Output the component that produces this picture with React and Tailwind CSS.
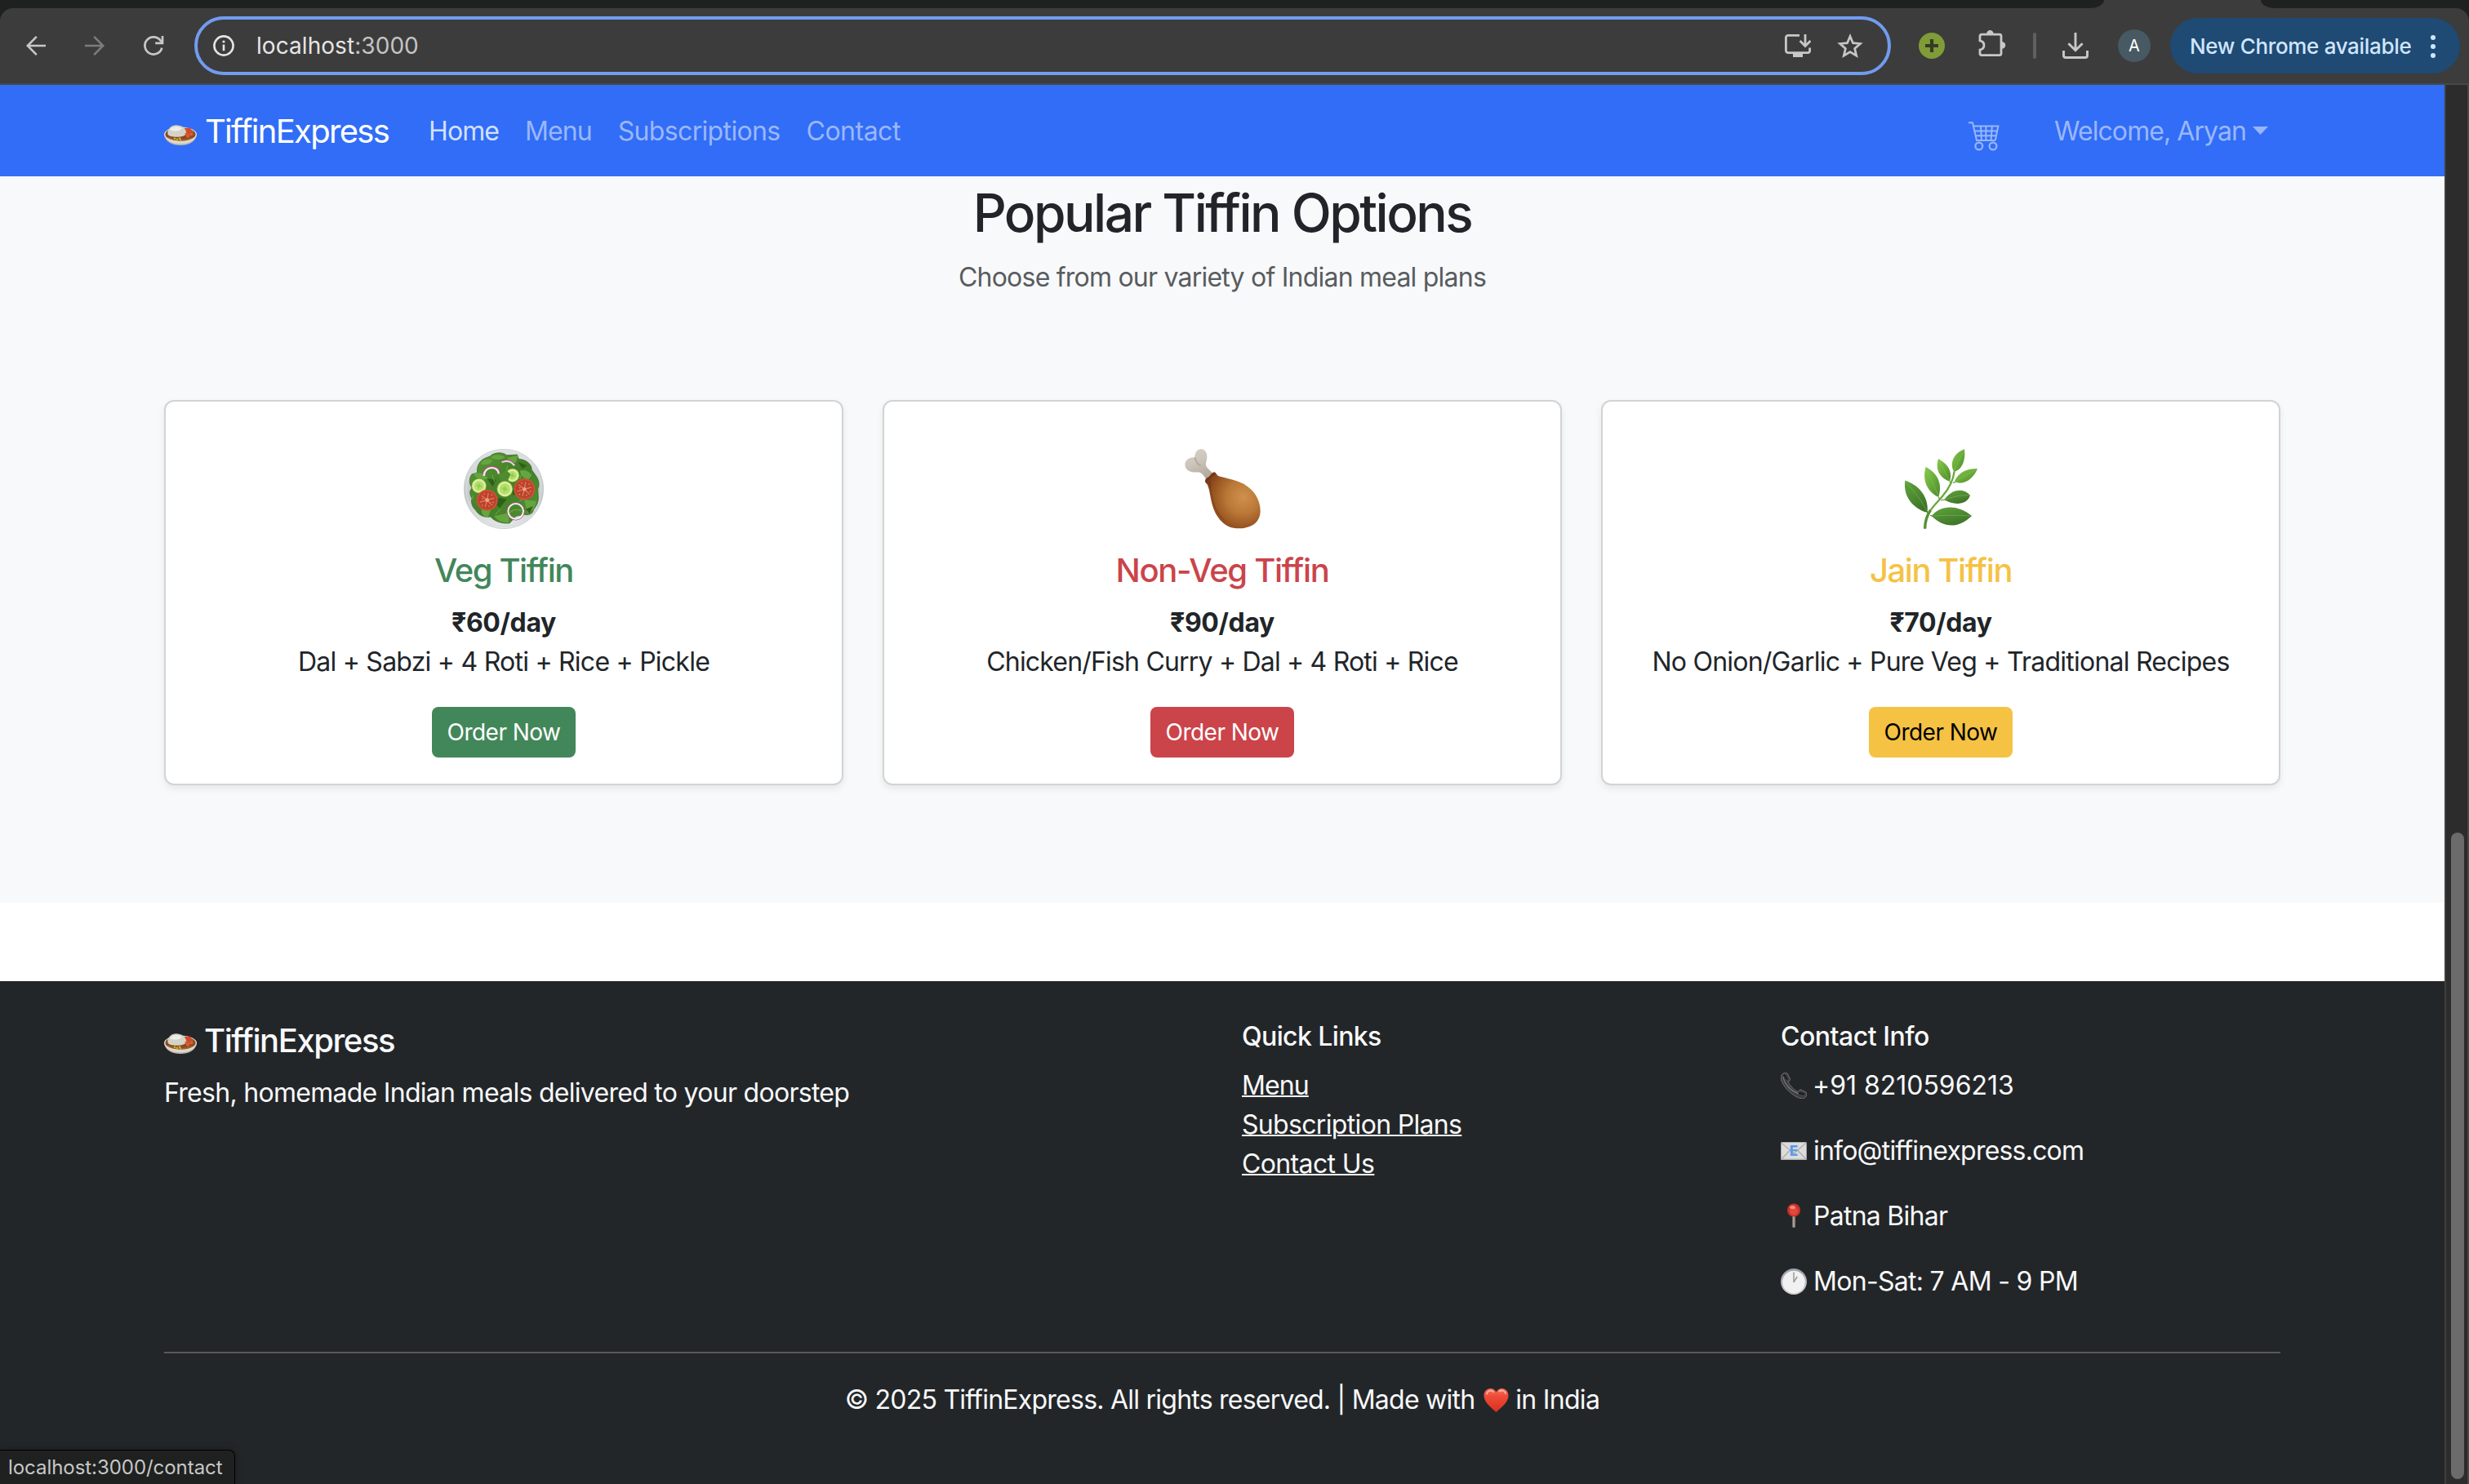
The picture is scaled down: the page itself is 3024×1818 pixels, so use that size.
import React from "react";

/* ---------- Browser toolbar icons ---------- */

const BackIcon = () => (
  <svg viewBox="0 0 24 24" className="h-6 w-6 shrink-0" fill="none" stroke="#c7c7c7" strokeWidth="2.6">
    <path d="M24 12H2M12.8 .9 1.8 12l11 11.1" />
  </svg>
);

const ForwardIcon = () => (
  <svg viewBox="0 0 24 24" className="ml-12 h-6 w-6 shrink-0" fill="none" stroke="#7c7c7c" strokeWidth="2.6">
    <path d="M0 12h22M11.2 .9l11 11.1-11 11.1" />
  </svg>
);

const ReloadIcon = () => (
  <svg viewBox="0 0 24 24" className="ml-12 h-6 w-6 shrink-0 overflow-visible" fill="none" stroke="#c7c7c7" strokeWidth="2.7">
    <path d="M22.3 14.6A10.6 10.6 0 1 1 20.4 5.4L22.6 8" />
    <path d="M23 0v8.8h-8.8" />
  </svg>
);

const InfoIcon = () => (
  <svg viewBox="0 0 26 26" className="h-[26px] w-[26px] shrink-0" fill="none" stroke="#e3e3e3" strokeWidth="2.6">
    <circle cx="13" cy="13" r="11.6" />
    <path d="M13 11.6v7.6" />
    <circle cx="13" cy="8" r="1.6" fill="#e3e3e3" stroke="none" />
  </svg>
);

const InstallIcon = () => (
  <svg viewBox="0 0 32 28" className="h-7 w-8 shrink-0" fill="none" stroke="#c7c7c7" strokeWidth="2.8">
    <path d="M18 1.4H4A2.6 2.6 0 0 0 1.4 4v16A2.6 2.6 0 0 0 4 22.6h24a2.6 2.6 0 0 0 2.6-2.6v-3.4" />
    <path d="M10 23.5h12v4.5H10z" fill="#c7c7c7" stroke="none" />
    <path d="M25 0v14M18.6 8l6.4 6.4L31.4 8" />
  </svg>
);

const StarIcon = () => (
  <svg viewBox="0 0 32 31" className="h-[31px] w-8 shrink-0" fill="none" stroke="#c7c7c7" strokeWidth="2.7">
    <path d="M16 3.4l3.5 8.3 8.9.8-6.8 5.9 2.1 8.8L16 22.5l-7.7 4.7 2.1-8.8-6.8-5.9 8.9-.8z" />
  </svg>
);

const AddExtensionIcon = () => (
  <svg viewBox="0 0 32 32" className="ml-[34px] h-8 w-8 shrink-0">
    <circle cx="16" cy="16" r="16" fill="#7f9c39" />
    <path d="M16 8v16M8 16h16" stroke="#363c25" strokeWidth="4.2" />
  </svg>
);

const PuzzleIcon = () => (
  <svg viewBox="0 0 34 34" className="mb-1 ml-[41px] h-[34px] w-[34px] shrink-0">
    <path d="M10 5.2C10 2.2 12 0 14.4 0s4.4 2.200 4.400 5.200z" fill="#c7c7c7" />
    <path d="M28 14c3 0 5.200 1.800 5.200 4.400S31 22.800 28 22.800z" fill="#c7c7c7" />
    <path
      d="M4 5.200h22a2 2 0 0 1 2 2V28.600a2 2 0 0 1-2 2H4a2 2 0 0 1-2-2V24c3-.6 5-2.800 5-5.600s-2-5-5-5.600V7.200a2 2 0 0 1 2-2z"
      fill="none"
      stroke="#c7c7c7"
      strokeWidth="2.8"
    />
  </svg>
);

const DownloadIcon = () => (
  <svg viewBox="0 0 32 32" className="ml-8 h-8 w-8 shrink-0" fill="none" stroke="#c7c7c7" strokeWidth="2.9">
    <path d="M16 0v21M7.400 13.200L16 21.800l8.600-8.600" />
    <path d="M1.500 22v6a2.500 2.500 0 0 0 2.500 2.500h24a2.500 2.500 0 0 0 2.500-2.500v-6" />
  </svg>
);

/* ---------- Page icons ---------- */

const CartIcon = () => (
  <svg viewBox="0 0 38 36" className="mt-[13px] h-9 w-[38px] shrink-0" fill="none" stroke="#98b6fa" strokeWidth="2">
    <path d="M0 1.200h5L10 23h22.600M6 5.400h30.400L32.800 23M7.600 11.500h27.800M9 17.300h25M15 5.400l1 17.600M21.400 5.400V23M28.800 5.400L27.600 23" />
    <circle cx="12.800" cy="30" r="4.400" strokeWidth="2.200" />
    <circle cx="30" cy="30" r="4.400" strokeWidth="2.200" />
  </svg>
);

const CurryIcon = ({ className }) => (
  <svg viewBox="0 0 40 25" className={className}>
    <path d="M0 11c0 8 8 14 20 14s20-6 20-14z" fill="#bdb8ae" />
    <path d="M1.500 15c3 6 10 8.200 18.500 8.200S35.500 21 38.500 15z" fill="#dcd8ce" />
    <ellipse cx="20" cy="11.500" rx="20" ry="9" fill="#e3ddd2" />
    <ellipse cx="20" cy="11.700" rx="18.600" ry="7.900" fill="#8a4a22" />
    <path d="M22 5c6-3 12 0 14.500 4l-5 4-8-2z" fill="#b4582b" />
    <path d="M5 15c5 4 20 5.500 29 1" fill="none" stroke="#a5632f" strokeWidth="1.500" />
    <path d="M4.500 11C4 7 6 5 7 3.500 10 .5 15-.4 19 1c4 .6 7.500 4 8.300 8.500.3 3-4 5-9.800 5.300-7 .2-12.500-1-13-3.800z" fill="#d4d3c9" />
    <path d="M7 6C10 1.500 17 .7 22 4.500c-4 4-11 4-15 1.500z" fill="#eeede6" />
    <g fill="#e25a33">
      <circle cx="29" cy="13.500" r="2.200" />
      <circle cx="33.500" cy="11.500" r="2" />
      <circle cx="30" cy="6.200" r="2.600" fill="#e8402a" />
      <circle cx="27" cy="11" r="1.500" />
    </g>
    <g fill="#c6bb2c">
      <circle cx="13" cy="16.800" r="1.200" />
      <circle cx="16" cy="17.800" r="1.200" />
      <circle cx="19" cy="16.500" r="1.200" />
      <circle cx="20" cy="18.200" r="1.100" />
    </g>
  </svg>
);

const Tomato = ({ x, y }) => (
  <g transform={`translate(${x} ${y})`}>
    <circle r="39" fill="#d24f38" />
    <circle r="33" fill="#bd412c" />
    <path d="M0 0L-20-16M0 0L4-25M0 0L24-7M0 0L18 18M0 0L-7 24M0 0L-25 7" stroke="#dd7d5f" strokeWidth="4" strokeLinecap="round" />
    <circle r="7" fill="#efa184" />
    <g fill="#dba34a">
      <circle cx="-10" cy="-23" r="2.500" />
      <circle cx="-17" cy="-5" r="2.500" />
      <circle cx="17" cy="-19" r="2.500" />
      <circle cx="22" cy="8" r="2.500" />
      <circle cx="7" cy="22" r="2.500" />
      <circle cx="-18" cy="19" r="2.500" />
    </g>
  </g>
);

const Cucumber = ({ x, y, r }) => (
  <g transform={`translate(${x} ${y})`}>
    <circle r={r} fill="#6fa52e" />
    <circle r={r - 2.500} fill="#dcefa0" />
    <circle r={r - 10} fill="#b5df6c" />
    <path d="M0-12L5-2 13 3 2 5-3 13-5 2-13-3-3-5z" fill="#93cc52" />
  </g>
);

const SaladIcon = () => (
  <svg viewBox="264 209 294 294" className="h-[98px] w-[98px]">
    <defs>
      <linearGradient id="plate" x1="0" y1="0" x2="0" y2="1">
        <stop offset="0" stopColor="#e2e5e6" />
        <stop offset="0.6" stopColor="#c3c8c9" />
        <stop offset="1" stopColor="#e6e9ea" />
      </linearGradient>
      <linearGradient id="lettuce" x1="0" y1="0" x2="1" y2="1">
        <stop offset="0" stopColor="#5b9838" />
        <stop offset="0.5" stopColor="#437e27" />
        <stop offset="1" stopColor="#539136" />
      </linearGradient>
    </defs>
    <circle cx="411" cy="356" r="146" fill="url(#plate)" stroke="#bcc1c2" strokeWidth="2" />
    <circle cx="411" cy="356" r="137" fill="none" stroke="#d8dcdd" strokeWidth="4" />
    <path
      d="M360 236c14-14 44-18 62-4l38-2 6 16c26 2 48 18 48 40l14 20c12 16 16 34 8 50l2 32c0 22-10 34-18 44 0 16-20 22-34 18l-30 6-24 26c-24 2-52-4-70-24-24 4-44-6-54-24-14-12-18-30-14-44-12-20-6-30 0-38-10-14-12-34 0-50l20-6c-4-22 8-44 26-52z"
      fill="url(#lettuce)"
      stroke="#34601d"
      strokeWidth="2"
    />
    <g fill="#65a53f">
      <path d="M362 240c14-12 38-12 54 0-16 12-40 10-54 0z" />
      <path d="M326 262c10-16 30-20 44-12-6 16-28 22-44 12z" />
      <path d="M424 242l40-10-8 26c-12 6-26 2-32-16z" />
      <path d="M300 300c16-8 40-2 52 16-16 12-42 6-52-16z" />
      <path d="M470 290c16-8 34 0 44 16l-10 14c-18 0-30-12-34-30z" />
      <path d="M330 430l38-8-14 36c-14 2-28-8-24-28z" />
      <path d="M376 456l54-12v36c-20 2-42-6-54-24z" />
      <path d="M486 396l44 4c-2 22-14 40-32 44z" />
    </g>
    <g fill="#2f6019">
      <path d="M350 318l34 4-14 26z" />
      <path d="M392 388l30 6-26 32-14-14z" />
      <path d="M462 256l34 14-16 12z" />
      <path d="M440 350l14 24-10 6z" />
      <path d="M492 430l26-10-12 26z" />
    </g>
    <g fill="none" stroke="#6fae46" strokeWidth="3">
      <path d="M400 320l-10-40M420 310l4-40M378 330l-10-26M470 320l10-30M400 430l-20 20M470 400l20-10M300 380l-6 14" />
    </g>
    <path d="M334 306c0-40 60-44 62-8" fill="none" stroke="#b8467f" strokeWidth="4" />
    <path d="M338 308c0-36 52-40 54-8" fill="none" stroke="#f2e8ee" strokeWidth="7" />
    <path d="M404 258c14-8 34-6 46 12" fill="none" stroke="#ecd3e2" strokeWidth="7" />
    <path d="M404 254c14-8 34-6 46 10" fill="none" stroke="#b8467f" strokeWidth="3" />
    <Cucumber x={443} y={306} r={26} />
    <path d="M392 306l28-20 16 16-12 28-20 8z" fill="#4f8c2f" />
    <Cucumber x={320} y={345} r={28} />
    <Cucumber x={415} y={356} r={30} />
    <Tomato x={350} y={397} />
    <Tomato x={487} y={357} />
    <circle cx="455" cy="438" r="32" fill="none" stroke="#b8467f" strokeWidth="3" />
    <circle cx="455" cy="438" r="28" fill="none" stroke="#f4ecf1" strokeWidth="6" />
    <path d="M432 444c10-12 28-14 44-8" stroke="#6cac43" strokeWidth="4" fill="none" />
  </svg>
);

const DrumstickIcon = () => (
  <svg viewBox="264 209 294 294" className="h-[98px] w-[98px]">
    <defs>
      <radialGradient id="meat" gradientUnits="userSpaceOnUse" cx="488" cy="386" r="150">
        <stop offset="0" stopColor="#d0914c" />
        <stop offset="0.4" stopColor="#bb7838" />
        <stop offset="0.75" stopColor="#96531f" />
        <stop offset="1" stopColor="#733816" />
      </radialGradient>
      <linearGradient id="bone" x1="0" y1="0" x2="0.4" y2="1">
        <stop offset="0" stopColor="#d9d3cb" />
        <stop offset="0.5" stopColor="#cdc5bb" />
        <stop offset="1" stopColor="#b5aba0" />
      </linearGradient>
    </defs>
    <path
      d="M310 240c0-42 46-40 45-2 0 12-6 22-4 32 4 10 14 18 28 31l-27 20c-8-14-14-22-24-26-12-2-26 2-38-4-28-14-18-54 20-51z"
      fill="url(#bone)"
    />
    <path d="M310 240c4 14 8 26 22 30" fill="none" stroke="#b3a99d" strokeWidth="5" />
    <path
      d="M348 326c2-10 8-12 14-15 6-4 8-14 20-17 6 2 8 10 14 14 24 8 58 12 90 28 40 20 66 58 65 104-2 40-34 61-80 61-50 0-84-38-98-92-6-22-8-48-16-68-4-6-10-8-9-15z"
      fill="url(#meat)"
    />
    <path d="M368 330c2 54 12 110 60 148-34-20-50-56-58-98-3-18-3-34-10-50z" fill="#6b3213" opacity=".55" />
    <path d="M350 325c8 2 12-6 16-12 4-4 12-6 18-16" fill="none" stroke="#6f3515" strokeWidth="5" />
  </svg>
);

const HerbIcon = () => (
  <svg viewBox="264 209 294 294" className="h-[98px] w-[98px]">
    <defs>
      <linearGradient id="leafTop" x1="0" y1="0" x2="1" y2="1">
        <stop offset="0" stopColor="#86cb4a" />
        <stop offset="1" stopColor="#4d8c2c" />
      </linearGradient>
      <linearGradient id="leafLow" x1="0" y1="0" x2="0.6" y2="1">
        <stop offset="0" stopColor="#62a53d" />
        <stop offset="1" stopColor="#3d7428" />
      </linearGradient>
    </defs>
    <path d="M353 501c2-64 40-88 64-118 24-28 40-58 44-92" fill="none" stroke="#69a83c" strokeWidth="7" />
    <path d="M353 502c0-30 8-50 20-68" fill="none" stroke="#568f33" strokeWidth="10" />
    <path d="M363 444l-2-6M403 386l4 8M444 328l4 6M380 455l-8-2M412 397l14-1M456 333l8-1" stroke="#69a83c" strokeWidth="4" />
    <path d="M280 325c40 12 88 50 82 118-38-10-92-48-82-118z" fill="url(#leafLow)" />
    <path d="M356 275c36 20 64 52 47 111-32-14-64-52-47-111z" fill="url(#leafTop)" />
    <path d="M402 245c32 18 54 44 42 83-30-10-56-36-42-83z" fill="url(#leafTop)" />
    <path d="M498 210c4 34-4 74-38 83-16-24-8-66 38-83z" fill="url(#leafTop)" />
    <path d="M546 282c-12 30-44 64-85 48 14-34 44-50 85-48z" fill="url(#leafTop)" />
    <path d="M424 396c20-34 66-50 95-17-10 34-56 40-95 17z" fill="url(#leafLow)" />
    <path d="M377 455c32-38 92-46 148 0-54 52-108 40-148 0z" fill="url(#leafLow)" />
    <g fill="none" stroke="#8fc563" strokeWidth="2" opacity=".7">
      <path d="M284 332c32 36 58 68 76 106M358 282c16 36 32 68 44 98M404 252c14 26 28 50 38 72M496 216c-14 26-26 50-36 72M540 286c-26 12-50 28-74 42M430 394c28-10 56-16 86-14M384 455c44-2 90-4 136 0" />
    </g>
  </svg>
);

const PhoneIcon = () => (
  <svg viewBox="0 0 32 32" className="h-8 w-8">
    <path
      d="M1 3C2 .8 5.500-.2 8 1l3.400 6.400c.8 2-1 3-2.400 3.600.6 3.400 8 11 12 12.600 1-1.600 2-3 4-2.600l6 3.200c1.400 1.800.6 5-1.400 6.600-2.400 1.800-6 .8-9.600-.8C11 25.500 2.500 16 .6 8.500.2 6.500.2 4.500 1 3z"
      fill="#3d3e3f"
      stroke="#6f7173"
      strokeWidth="1"
    />
    <path d="M3 5c1 8 8 17 19 21" fill="none" stroke="#77797b" strokeWidth="1.200" />
    <path d="M4 2.500l4 6M22 25l7 1.500" stroke="#181919" strokeWidth="2" />
  </svg>
);

const MailIcon = () => (
  <svg viewBox="0 0 32 32" className="h-8 w-8">
    <rect x="0.3" y="5.300" width="31.400" height="21.400" rx="0.8" fill="#dcdcdc" />
    <path d="M.5 26.500L12 14.500M31.500 26.500L20 14.500M.5 5.800L16 19 31.500 5.800" fill="none" stroke="#a9a9a9" strokeWidth="1.100" />
    <rect x="0.3" y="25.600" width="31.400" height="1.200" fill="#b7b7b7" />
    <text x="16" y="22.300" textAnchor="middle" fontFamily="Inter, sans-serif" fontWeight="800" fontSize="17" fill="#5b9bea">
      E
    </text>
  </svg>
);

const PinIcon = () => (
  <svg viewBox="0 0 32 32" className="h-8 w-8">
    <path d="M14.300 14h3.600v14.500c0 2-3.600 2-3.600 0z" fill="#8f8580" />
    <path d="M15.200 16h1v13h-1z" fill="#b9b0aa" />
    <circle cx="16" cy="8.500" r="8" fill="#cb3229" />
    <circle cx="16" cy="9.500" r="5" fill="#e2483c" />
    <ellipse cx="14.500" cy="5" rx="3.500" ry="2" fill="#f08a80" />
  </svg>
);

const ClockIcon = () => (
  <svg viewBox="0 0 32 32" className="h-8 w-8">
    <defs>
      <linearGradient id="clockRim" x1="0" y1="0" x2="0" y2="1">
        <stop offset="0" stopColor="#9aa0ab" />
        <stop offset="1" stopColor="#d0d0d0" />
      </linearGradient>
    </defs>
    <circle cx="16" cy="16" r="16" fill="url(#clockRim)" />
    <circle cx="16" cy="16.600" r="13.800" fill="#f1f1f1" />
    <path d="M16 17V4.500M15.800 17l4.400-7" stroke="#9a9a9a" strokeWidth="1.500" />
  </svg>
);

const HeartIcon = () => (
  <svg viewBox="0 0 31 29" className="ml-[11px] mr-[8px] h-[29px] w-[31px]">
    <defs>
      <linearGradient id="heart" x1="0" y1="0" x2="0" y2="1">
        <stop offset="0" stopColor="#f4705b" />
        <stop offset="0.35" stopColor="#ee4a35" />
        <stop offset="1" stopColor="#d92f22" />
      </linearGradient>
    </defs>
    <path d="M15.500 29C11 24.500.5 17.500.5 9 .5 3.500 4 0 8.500 0c3.200 0 5.800 1.800 7 4.500C16.700 1.800 19.300 0 22.500 0 27 0 30.500 3.500 30.500 9c0 8.500-10.500 15.500-15 20z" fill="url(#heart)" />
    <path d="M4 6.500C5 2.500 9 1.500 12 4M19.500 3.500c3-2 6.500-.8 7.500 2.500" fill="none" stroke="#fbb3a6" strokeWidth="1.800" strokeLinecap="round" />
  </svg>
);

/* ---------- Browser chrome ---------- */

function BrowserBar() {
  return (
    <header className="flex h-[104px] flex-col bg-[#1f2120]">
      <div className="flex h-[10px] justify-between bg-[#3c3c3c]">
        <div className="h-full w-[2577px] bg-[#1f2120] [border-bottom-right-radius:17px_10px]" />
        <div className="h-full w-[255px] bg-[#1f2120] [border-bottom-left-radius:17px_10px]" />
      </div>
      <div className="flex h-[94px] items-center rounded-t-[16px] border-b-2 border-[#484848] bg-[#3c3c3c] pl-8">
        <BackIcon />
        <ForwardIcon />
        <ReloadIcon />
        <div className="ml-[38px] flex h-[72px] w-[2078px] shrink-0 items-center rounded-full border-4 border-[#719cf0] pl-[19px] pr-[30px]">
          <InfoIcon />
          <div className="ml-[27px] flex-1 text-[28px] leading-[40px] tracking-[0.06px] text-[#e5e5e5]">
            localhost<span className="text-[#c4c4c4]">:3000</span>
          </div>
          <div className="flex items-center gap-8">
            <InstallIcon />
            <StarIcon />
          </div>
        </div>
        <AddExtensionIcon />
        <PuzzleIcon />
        <div className="ml-[33px] h-8 w-1 shrink-0 rounded-full bg-[#5f6060]" />
        <DownloadIcon />
        <div className="ml-9 flex h-10 w-10 shrink-0 items-center justify-center rounded-full bg-[#475962] text-[20px] text-white">
          A
        </div>
        <div className="ml-6 flex h-[68px] w-[355px] shrink-0 items-center rounded-full bg-[#1f4a73] pl-[24px] pt-px">
          <span className="w-[274px] whitespace-nowrap text-[26px] font-medium leading-[40px] tracking-[-0.33px] text-[#cfe6fd]">
            New Chrome available
          </span>
          <div className="ml-[21px] flex flex-col gap-[5px]">
            <span className="h-1.5 w-1.5 rounded-full bg-[#cfe6fd]" />
            <span className="h-1.5 w-1.5 rounded-full bg-[#cfe6fd]" />
            <span className="h-1.5 w-1.5 rounded-full bg-[#cfe6fd]" />
          </div>
        </div>
      </div>
    </header>
  );
}

/* ---------- Page ---------- */

function NavBar() {
  return (
    <nav className="flex h-28 items-center bg-[#316df6] pl-[201px] pr-[216px] text-[32px] leading-[48px] text-[#9ab7fb]">
      <CurryIcon className="mt-[10px] h-[25px] w-10" />
      <span className="ml-[10px] w-[274px] pt-[2px] text-[40px] leading-[60px] tracking-[-1.7px] text-white">TiffinExpress</span>
      <div className="flex gap-8 pt-[2px]">
        <a className="tracking-[-0.9px] text-[#d3e0fd]">Home</a>
        <a className="tracking-[-0.95px]">Menu</a>
        <a className="tracking-[-0.65px]">Subscriptions</a>
        <a className="tracking-[-0.5px]">Contact</a>
      </div>
      <div className="ml-auto flex items-center">
        <CartIcon />
        <span className="ml-[67px] pt-[2px] tracking-[-0.93px]">Welcome, Aryan</span>
        <svg viewBox="0 0 19 10" className="ml-[8px] h-[10px] w-[19px]">
          <path d="M0 0h19L9.500 10z" fill="#98b6fa" />
        </svg>
      </div>
    </nav>
  );
}

const PLANS = [
  {
    name: "Veg Tiffin",
    nameClass: "text-[#428759] tracking-[-1.45px]",
    price: "₹60/day",
    items: "Dal + Sabzi + 4 Roti + Rice + Pickle",
    itemsClass: "tracking-[-0.76px]",
    button: "bg-[#428759] text-white",
    Icon: SaladIcon,
  },
  {
    name: "Non-Veg Tiffin",
    nameClass: "text-[#cb444a] tracking-[-1.3px]",
    price: "₹90/day",
    items: "Chicken/Fish Curry + Dal + 4 Roti + Rice",
    itemsClass: "tracking-[-0.81px]",
    button: "bg-[#cb444a] text-white",
    Icon: DrumstickIcon,
  },
  {
    name: "Jain Tiffin",
    nameClass: "text-[#f5c244] tracking-[-1.42px]",
    price: "₹70/day",
    items: "No Onion/Garlic + Pure Veg + Traditional Recipes",
    itemsClass: "tracking-[-0.77px]",
    button: "bg-[#f5c244] text-black",
    Icon: HerbIcon,
  },
];

function PlanCard({ plan }) {
  const { Icon } = plan;
  return (
    <article className="flex h-[472px] flex-1 flex-col items-center rounded-xl border-2 border-[#d2d3d4] bg-white pt-[58px] shadow-[0_4px_8px_rgba(0,0,0,0.075)]">
      <Icon />
      <h3 className={`mt-[27px] text-[40px] font-medium leading-[48px] ${plan.nameClass}`}>{plan.name}</h3>
      <p className="mt-4 text-[32px] font-bold leading-[48px] tracking-[-0.38px]">{plan.price}</p>
      <p className={`whitespace-nowrap text-[32px] leading-[48px] ${plan.itemsClass}`}>{plan.items}</p>
      <button className={`mt-[31px] h-[62px] w-44 rounded-lg text-[28px] leading-[42px] tracking-[-0.53px] ${plan.button}`}>
        Order Now
      </button>
    </article>
  );
}

function PopularOptions() {
  return (
    <section className="flex h-[890px] flex-col bg-[#f8f9fa] px-[201px] pt-[6px] text-[#212529]">
      <h2 className="text-center text-[64px] font-medium leading-[77px] tracking-[-2.5px]">Popular Tiffin Options</h2>
      <p className="mt-[17px] text-center text-[32px] leading-[48px] tracking-[-0.78px] text-[#585c60]">
        Choose from our variety of Indian meal plans
      </p>
      <div className="mt-[126px] flex gap-12">
        {PLANS.map((plan) => (
          <PlanCard key={plan.name} plan={plan} />
        ))}
      </div>
    </section>
  );
}

const CONTACTS = [
  { text: "+91 8210596213", Icon: PhoneIcon, className: "tracking-[-0.02px]" },
  { text: "info@tiffinexpress.com", Icon: MailIcon, className: "pl-[1px] tracking-[-0.79px]" },
  { text: "Patna Bihar", Icon: PinIcon, className: "pl-[1px] tracking-[-0.73px]" },
  { text: "Mon-Sat: 7 AM - 9 PM", Icon: ClockIcon, className: "pl-[1px] tracking-[-0.7px]" },
];

function Footer() {
  return (
    <footer className="mt-24 flex-1 bg-[#232629] px-[201px] pt-[49px] text-[32px] leading-[48px] text-[#f8f9fa]">
      <div className="flex h-[405px]">
        <div className="w-[1320px]">
          <div className="flex items-center">
            <CurryIcon className="mt-[6px] h-[25px] w-10" />
            <h5 className="ml-[9px] text-[40px] font-medium leading-[48px] tracking-[-1.42px]">TiffinExpress</h5>
          </div>
          <p className="mt-4 tracking-[-0.71px]">Fresh, homemade Indian meals delivered to your doorstep</p>
        </div>
        <div className="w-[660px]">
          <h6 className="font-medium leading-[38px] tracking-[-0.6px]">Quick Links</h6>
          <ul className="mt-[17px] underline decoration-2">
            <li className="tracking-[-0.9px]">Menu</li>
            <li className="tracking-[-0.67px]">Subscription Plans</li>
            <li className="tracking-[-0.62px]">Contact Us</li>
          </ul>
        </div>
        <div>
          <h6 className="font-medium leading-[38px] tracking-[-0.5px]">Contact Info</h6>
          <ul className="mt-[17px] flex flex-col gap-8">
            {CONTACTS.map(({ text, Icon, className }) => (
              <li key={text} className="flex items-center gap-[7px]">
                <Icon />
                <span className={className}>{text}</span>
              </li>
            ))}
          </ul>
        </div>
      </div>
      <hr className="h-0.5 border-0 bg-[#59595c]" />
      <p className="mt-[33px] flex items-center justify-center whitespace-nowrap">
        <span className="tracking-[-0.76px]">© 2025 TiffinExpress. All rights reserved. | Made with</span>
        <HeartIcon />
        <span className="tracking-[-0.7px]">in India</span>
      </p>
    </footer>
  );
}

export default function App() {
  return (
    <div className="relative flex h-[1818px] w-[3024px] flex-col overflow-hidden bg-white font-['Inter','Noto_Sans',sans-serif]">
      <BrowserBar />
      <div className="flex flex-1">
        <main className="flex w-[2994px] flex-col">
          <NavBar />
          <PopularOptions />
          <Footer />
        </main>
        <aside className="flex w-[30px] flex-col border-l-2 border-r-2 border-l-[#3f3f3f] border-r-[#484848] bg-[#2c2c2c]">
          <div className="ml-[6px] mt-[916px] h-[792px] w-4 rounded-full bg-[#6b6b6b]" />
        </aside>
      </div>
      <div className="absolute bottom-0 left-0 flex h-[42px] w-[288px] items-center rounded-tr-lg border-r border-t border-black bg-[#1f2120] pl-[10px] text-[24px] tracking-[-0.05px] text-[#c7c7c7] shadow-[0_0_8px_rgba(0,0,0,0.3)]">
        localhost:3000/contact
      </div>
    </div>
  );
}
